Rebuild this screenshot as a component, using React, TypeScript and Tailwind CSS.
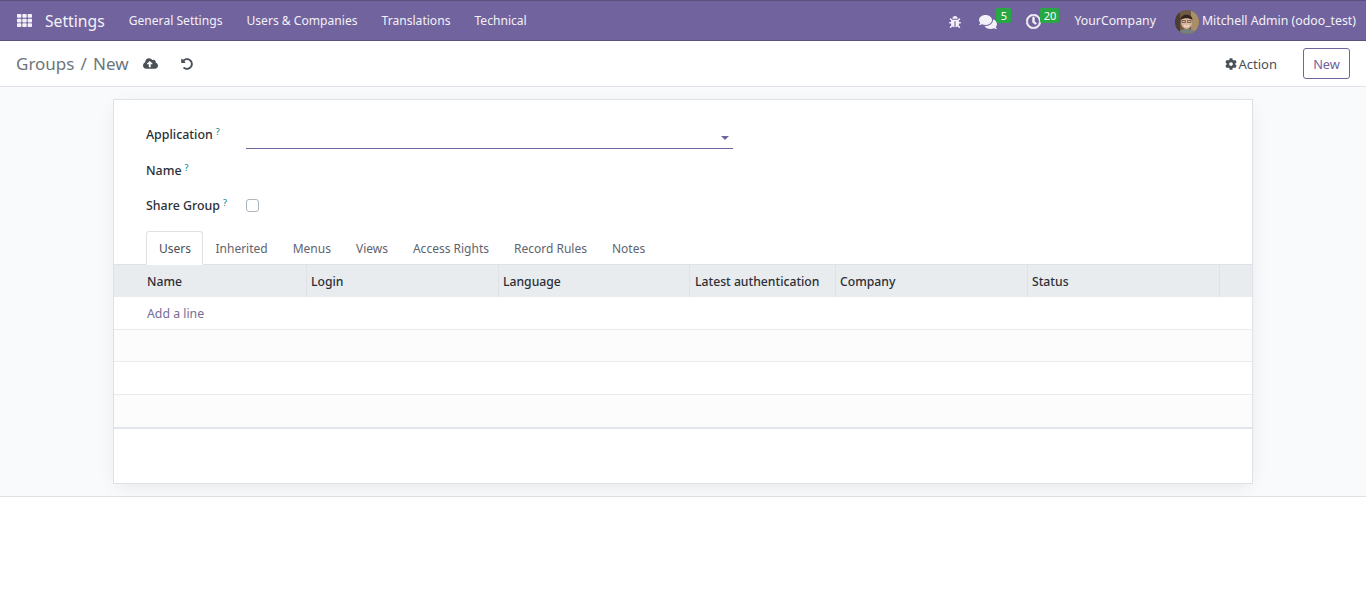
import { FaBug, FaCloudUploadAlt, FaCog, FaComments, FaRegClock, FaTh, FaUndoAlt } from "react-icons/fa";

const menus = ["General Settings", "Users & Companies", "Translations", "Technical"];
const tabs = ["Users", "Inherited", "Menus", "Views", "Access Rights", "Record Rules", "Notes"];
const columns = [
    { name: "Name", width: "w-[193px] pl-[33px]" },
    { name: "Login", width: "w-[192px] pl-[4px]" },
    { name: "Language", width: "w-[191px] pl-[4px]" },
    { name: "Latest authentication", width: "w-[146px] pl-[5px]" },
    { name: "Company", width: "w-[192px] pl-[4px]" },
    { name: "Status", width: "w-[192px] pl-[4px]" },
    { name: "", width: "flex-1" },
];

const Help = () => <sup className="ml-[3px] text-[9px] leading-none font-normal text-[#017e84] relative -top-[4px]">?</sup>;

const Avatar = () => (
    <svg viewBox="0 0 24 24" className="w-6 h-6 rounded-full mr-[3px]">
        <rect width="24" height="24" fill="#6f5a45" />
        <rect x="16" width="8" height="24" fill="#a98f66" />
        <rect width="5" height="24" fill="#4a3c30" />
        <path d="M3 24c1-4 5-5 9-5s8 1 9 5z" fill="#77807c" />
        <ellipse cx="11.500" cy="12" rx="5.500" ry="7" fill="#dcb59c" />
        <path d="M5.500 10C5.500 3 17.500 3 17.500 10 14 7.500 9 7.500 5.500 10z" fill="#33261e" />
        <path d="M7 10.500h3.500v2H7zM12.500 10.500H16v2h-3.500z" fill="none" stroke="#3a3330" strokeWidth="0.6" />
        <path d="M9 15.500c1.500 1 3.500 1 5 0" fill="none" stroke="#f7efe9" strokeWidth="1" />
    </svg>
);

const Badge = ({ n, className }: { n: number; className: string }) => (
    <span className={`absolute bg-[#28a745] text-white text-[11px] leading-[15px] h-[15px] text-center rounded-[2px] ${className}`}>{n}</span>
);

const App = () => {
    return (
        <div className="h-[608px] bg-white text-[12.3px] text-[#2c3036] overflow-hidden font-['Noto_Sans',sans-serif]">
            <nav className="h-[41px] pt-[2px] flex items-center bg-[#71639e] border-y border-y-[#5b5080] text-white">
                <FaTh className="ml-[17px] -mt-[2px] text-[15px] text-[#f3f1f7]" />
                <span className="ml-[13px] text-[15.7px] mt-[1px] text-[#f3f1f7]">Settings</span>
                <div className="flex ml-[24px] gap-[24px] text-[12.1px] text-[#f3f1f7]">
                    {menus.map((m) => <span key={m}>{m}</span>)}
                </div>
                <div className="ml-auto flex items-center mr-[10px] text-[#f3f1f7]">
                    <FaBug className="text-[12px]" />
                    <span className="relative ml-[18px]">
                        <FaComments className="text-[18px]" />
                        <Badge n={5} className="-top-[5px] left-[17px] w-[15px]" />
                    </span>
                    <span className="relative ml-[29px]">
                        <FaRegClock className="text-[15px] stroke-[24px]" />
                        <Badge n={20} className="-top-[6px] left-[14px] w-[19px]" />
                    </span>
                    <span className="ml-[33px]">YourCompany</span>
                    <span className="ml-[19px] flex items-center">
                        <Avatar />
                        Mitchell Admin (odoo_test)
                    </span>
                </div>
            </nav>
            <div className="h-[46px] flex items-center bg-white border-b border-b-[#dee2e6]">
                <span className="ml-[16px] mt-[1px] text-[17px] text-[#6c757d] [word-spacing:1.7px]">Groups / New</span>
                <FaCloudUploadAlt className="ml-[14px] text-[15px] text-[#495057]" />
                <FaUndoAlt className="ml-[23px] text-[12px] text-[#495057]" />
                <span className="ml-auto flex items-center gap-[2px] text-[#495057]">
                    <FaCog className="text-[12px]" />
                    <span className="pt-[2px] text-[13px]">Action</span>
                </span>
                <button className="ml-[26px] mr-[16px] w-[47px] h-[31px] pt-[2px] rounded-[3px] border border-[#71639e] text-[12.8px] text-[#71639e]">New</button>
            </div>
            <main className="h-[410px] bg-[#f9fafb] border-b border-b-[#dee2e6] pt-[12px] pl-[113px]">
                <div className="w-[1140px] h-[385px] bg-white border border-[#dee2e6] shadow-[0_5px_20px_-5px_rgba(0,0,0,0.1)] flex flex-col">
                    <div className="pl-[32px] pt-[24px] h-[131px] font-medium text-[12.4px]">
                        <div className="flex h-[25px]">
                            <label className="w-[100px] pt-[2px]">Application<Help /></label>
                            <div className="w-[487px] h-[25px] border-b border-b-[#71639e] flex items-center justify-end pr-[4px]">
                                <span className="mt-[4px] border-x-[4px] border-x-transparent border-t-[4px] border-t-[#71639e]" />
                            </div>
                        </div>
                        <label className="block mt-[13px] h-[20px]">Name<Help /></label>
                        <div className="flex items-center mt-[13px] h-[20px]">
                            <label className="w-[100px] pt-[3px]">Share Group<Help /></label>
                            <span className="w-[13px] h-[13px] rounded-[3px] border border-[#adb5bd] bg-white" />
                        </div>
                    </div>
                    <div className="flex pl-[32px] h-[33px] text-[12px] text-[#5f636f]">
                        {tabs.map((t, i) => (
                            <span key={t} className={i === 0
                                ? "pl-[12px] pr-[11px] pt-[8px] h-[34px] bg-white border border-[#dee2e6] border-b-white rounded-t-[3px] z-10 text-[#495057]"
                                : "px-[12.5px] pt-[9px]"}>{t}</span>
                        ))}
                    </div>
                    <div className="flex h-[33px] items-center bg-[#e9ecef] border-t border-t-[#dee2e6] font-medium text-[12.2px]">
                        {columns.map((c, i) => (
                            <div key={i} className={`h-full pt-[2px] flex items-center border-r border-r-[#dee2e6] last:border-r-0 ${c.width}`}>{c.name}</div>
                        ))}
                    </div>
                    <div className="h-[33px] flex items-center pl-[33px] pt-[3px] border-b border-b-[#e9ecef] text-[#746c96]">Add a line</div>
                    <div className="h-[32px] bg-[#fcfcfd] border-b border-b-[#e9ecef]" />
                    <div className="h-[33px] border-b border-b-[#e9ecef]" />
                    <div className="h-[34px] bg-[#fcfcfd] border-b-2 border-b-[#e2e5e9]" />
                </div>
            </main>
        </div>
    );
};

export default App;
